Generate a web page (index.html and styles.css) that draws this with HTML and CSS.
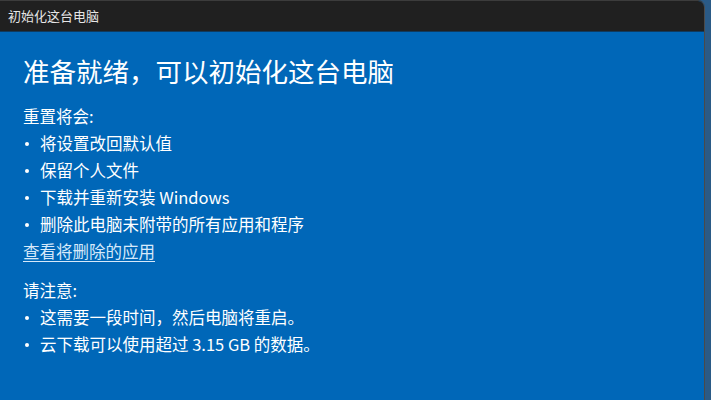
FILE: index.html
```html
<!DOCTYPE html>
<html lang="zh-CN">
<head>
<meta charset="utf-8">
<link rel="stylesheet" href="styles.css">
</head>
<body>
<div class="window">
  <div class="titlebar">初始化这台电脑</div>
  <div class="content">
    <h1 class="heading">准备就绪，可以初始化这台电脑</h1>
    <div class="label first">重置将会:</div>
    <ul class="list">
      <li>将设置改回默认值</li>
      <li>保留个人文件</li>
      <li>下载并重新安装 Windows</li>
      <li>删除此电脑未附带的所有应用和程序</li>
    </ul>
    <a class="link" href="#">查看将删除的应用</a>
    <div class="label second">请注意:</div>
    <ul class="list">
      <li>这需要一段时间，然后电脑将重启。</li>
      <li>云下载可以使用超过 3.15 GB 的数据。</li>
    </ul>
  </div>
</div>
</body>
</html>
```
FILE: styles.css
```css
html, body {
  margin: 0;
  padding: 0;
  width: 711px;
  height: 400px;
  overflow: hidden;
  background: #2a5a86;
}
body {
  font-family: "Noto Sans CJK SC", "Noto Sans", sans-serif;
  color: #ffffff;
}
.window {
  width: 705px;
  height: 400px;
  border-top: 1px solid #3c3c3c;
  border-right: 1px solid #4a4a4a;
  border-top-right-radius: 7px;
  overflow: hidden;
  background: #0067b8;
  box-sizing: border-box;
  display: flex;
  flex-direction: column;
}
.titlebar {
  height: 31px;
  flex: none;
  background: #202020;
  border-bottom: 1px solid #103a5e;
  box-sizing: border-box;
  color: #e6e6e6;
  font-size: 13px;
  line-height: 30px;
  padding-left: 8px;
}
.content {
  padding: 14px 0 0 23px;
}
.heading {
  margin: 0;
  font-size: 26.5px;
  font-weight: 400;
  line-height: 50px;
}
.label {
  font-size: 16.5px;
  line-height: 27px;
}
.label.first {
  margin-top: 7px;
}
.label.second {
  margin-top: 12px;
}
.list {
  list-style: none;
  margin: 0;
  padding: 0;
}
.list li {
  font-size: 16.5px;
  line-height: 27px;
  display: flex;
  align-items: center;
}
.list li::before {
  content: "";
  width: 4px;
  height: 4px;
  border-radius: 50%;
  background: #ffffff;
  margin-left: 2px;
  margin-right: 11px;
  margin-top: 1px;
  flex: none;
}
.link {
  display: inline-block;
  font-size: 16.5px;
  line-height: 27px;
  color: #d6e9fa;
  text-decoration: underline;
  text-underline-offset: 3px;
}
```
